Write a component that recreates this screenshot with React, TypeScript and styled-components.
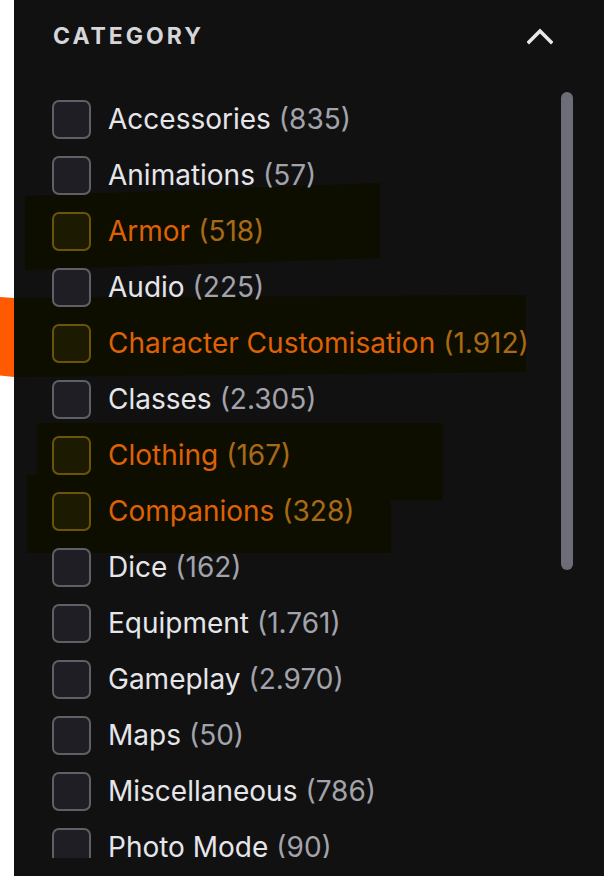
import React from 'react';
import styled, { createGlobalStyle } from 'styled-components';

const GlobalStyle = createGlobalStyle`
    html, body {
        margin: 0;
        padding: 0;
        background: #ffffff;
    }
    body {
        font-family: Inter, "Noto Sans", sans-serif;
    }
`;

const Page = styled.div`
    position: relative;
    display: flex;
    width: 604px;
    height: 876px;
    overflow: hidden;
`;

const Gutter = styled.div`
    width: 14px;
    flex-shrink: 0;
    background: #ffffff;
`;

const Panel = styled.div`
    position: relative;
    flex: 1;
    display: flex;
    flex-direction: column;
    background: #111112;
`;

const Header = styled.div`
    position: relative;
    z-index: 1;
    height: 71px;
    display: flex;
    align-items: center;
    justify-content: space-between;
    padding: 0 51px 0 39px;
    box-sizing: border-box;
`;

const Title = styled.h3`
    margin: 0;
    font-size: 23px;
    font-weight: 700;
    letter-spacing: 3px;
    color: #d6d6da;
`;

const Body = styled.div`
    position: relative;
    z-index: 1;
    display: flex;
    margin-top: 20px;
    height: 767px;
`;

const List = styled.ul`
    flex: 1;
    list-style: none;
    margin: 0;
    padding: 0 0 0 38px;
    overflow: hidden;
`;

const Row = styled.li`
    height: 56px;
    display: flex;
    align-items: center;
    gap: 17px;
    font-size: 28px;
    white-space: nowrap;
`;

const Box = styled.span<{ $marked?: boolean }>`
    width: 39px;
    height: 39px;
    box-sizing: border-box;
    border-radius: 7px;
    border: 2px solid ${p => (p.$marked ? '#6b5408' : '#5f5f66')};
    background: ${p => (p.$marked ? '#1c1a00' : '#1e1e24')};
    flex-shrink: 0;
`;

const Label = styled.span<{ $marked?: boolean }>`
    color: ${p => (p.$marked ? '#de6104' : '#e6e6ea')};
`;

const Count = styled.span<{ $marked?: boolean }>`
    margin-left: 8px;
    color: ${p => (p.$marked ? '#a86a14' : '#a3a3ab')};
`;

const Track = styled.div`
    width: 12px;
    margin: 1px 31px 0 0;
`;

const Thumb = styled.div`
    height: 478px;
    border-radius: 6px;
    background: #6d6d77;
`;

// marker strokes drawn over the panel
const Highlight = styled.div<{ $clip: string }>`
    position: absolute;
    inset: 0;
    background: #0e0e00;
    clip-path: ${p => p.$clip};
    z-index: 0;
`;

const Marker = styled.div`
    position: absolute;
    left: 0;
    top: 297px;
    width: 14px;
    height: 80px;
    background: #ff5a00;
    clip-path: polygon(0 0, 100% 1px, 100% 100%, 0 98%);
    z-index: 2;
`;

const Chevron = () => (
    <svg width="26" height="18" viewBox="0 0 26 18" fill="none">
        <polyline points="2,15 13,4 24,15" stroke="#e8e8ea" strokeWidth="3.6" strokeLinecap="square" strokeLinejoin="miter" />
    </svg>
);

const categories: { name: string; count: string; marked?: boolean }[] = [
    { name: 'Accessories', count: '835' },
    { name: 'Animations', count: '57' },
    { name: 'Armor', count: '518', marked: true },
    { name: 'Audio', count: '225' },
    { name: 'Character Customisation', count: '1.912', marked: true },
    { name: 'Classes', count: '2.305' },
    { name: 'Clothing', count: '167', marked: true },
    { name: 'Companions', count: '328', marked: true },
    { name: 'Dice', count: '162' },
    { name: 'Equipment', count: '1.761' },
    { name: 'Gameplay', count: '2.970' },
    { name: 'Maps', count: '50' },
    { name: 'Miscellaneous', count: '786' },
    { name: 'Photo Mode', count: '90' },
    { name: 'Quests', count: '412' },
];

// polygons in panel coordinates (panel starts 14px from the page edge)
const strokes = [
    'polygon(11px 196px, 366px 183px, 366px 258px, 11px 270px)',
    'polygon(0px 298px, 512px 295px, 512px 372px, 0px 377px)',
    'polygon(23px 423px, 429px 423px, 429px 500px, 23px 500px)',
    'polygon(13px 475px, 377px 475px, 377px 553px, 13px 553px)',
];

const App: React.FC = () => {
    return (
        <>
            <GlobalStyle />
            <Page>
                <Gutter />
                <Panel>
                    {strokes.map(c => (
                        <Highlight key={c} $clip={c} />
                    ))}
                    <Header>
                        <Title>CATEGORY</Title>
                        <Chevron />
                    </Header>
                    <Body>
                        <List>
                            {categories.map(c => (
                                <Row key={c.name}>
                                    <Box $marked={c.marked} />
                                    <span>
                                        <Label $marked={c.marked}>{c.name}</Label>
                                        <Count $marked={c.marked}>({c.count})</Count>
                                    </span>
                                </Row>
                            ))}
                        </List>
                        <Track>
                            <Thumb />
                        </Track>
                    </Body>
                </Panel>
                <Marker />
            </Page>
        </>
    );
};

export default App;
